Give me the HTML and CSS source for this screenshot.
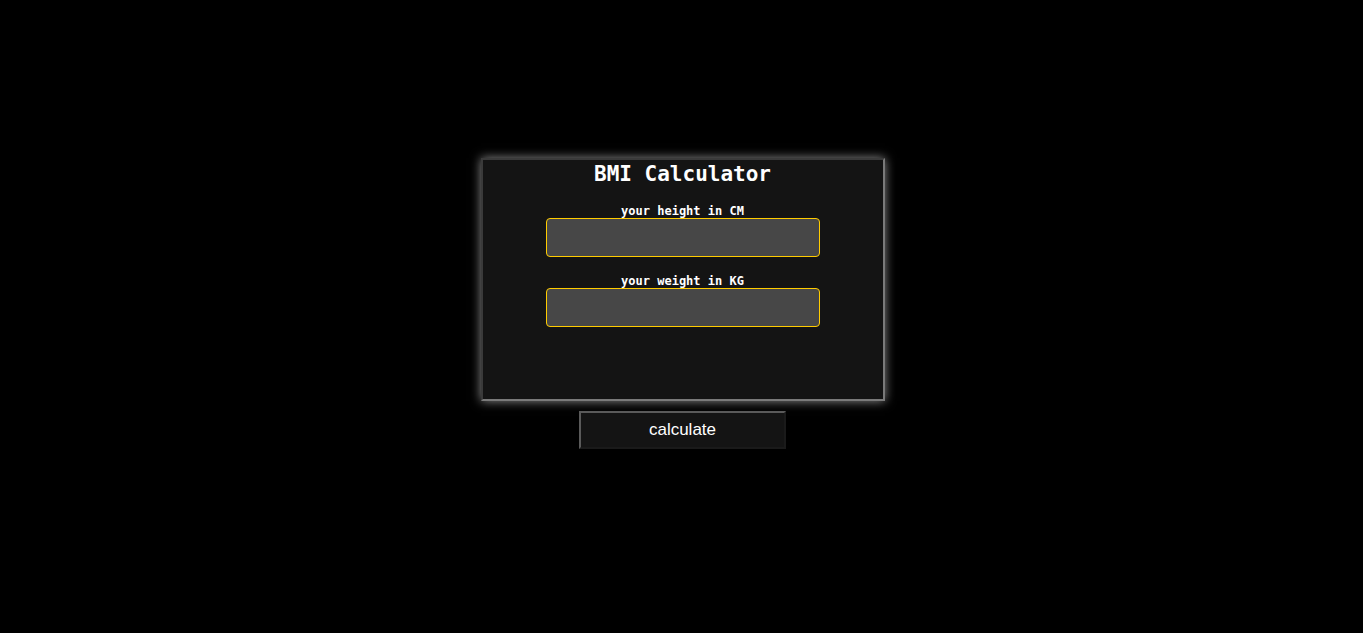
FILE: index.html
```html
<!DOCTYPE html>
<html>
<head>
<meta charset="utf-8">
<link rel="stylesheet" href="styles.css">
</head>
<body>
<main class="page">
  <section class="card">
    <h1 class="title">BMI Calculator</h1>
    <div class="field">
      <label class="label" for="h">your height in CM</label>
      <input class="input" id="h" type="text">
    </div>
    <div class="field">
      <label class="label" for="w">your weight in KG</label>
      <input class="input" id="w" type="text">
    </div>
  </section>
  <button class="btn">calculate</button>
</main>
</body>
</html>
```
FILE: styles.css
```css
html, body {
  margin: 0;
  padding: 0;
  background: #000;
}
.page {
  min-height: 100vh;
  box-sizing: border-box;
  display: flex;
  flex-direction: column;
  align-items: center;
  padding-top: 158px;
  padding-left: 2px;
}
.card {
  width: 404px;
  height: 243px;
  box-sizing: border-box;
  background: #141414;
  border: 2px solid;
  border-color: #3a3a3a #7a7a7a #7a7a7a #3a3a3a;
  box-shadow: 0 0 10px rgba(255,255,255,0.55);
  display: flex;
  flex-direction: column;
  align-items: center;
}
.title {
  margin: 0;
  padding-top: 1px;
  font-family: "DejaVu Sans Mono", "Liberation Mono", monospace;
  font-size: 21px;
  line-height: 26px;
  font-weight: bold;
  color: #fff;
}
.field {
  display: flex;
  flex-direction: column;
  align-items: center;
  margin-top: 17px;
}
.label {
  font-family: "DejaVu Sans Mono", "Liberation Mono", monospace;
  font-size: 12px;
  line-height: 14px;
  font-weight: bold;
  color: #fff;
}
.input {
  width: 274px;
  height: 39px;
  box-sizing: border-box;
  margin: 0;
  background: #474747;
  border: 1px solid #ffcc00;
  border-radius: 4px;
  outline: none;
  color: #fff;
}
.btn {
  margin-top: 10px;
  width: 207px;
  height: 38px;
  box-sizing: border-box;
  background: #141414;
  border: 2px solid;
  border-color: #5a5a5a #1a1a1a #1a1a1a #5a5a5a;
  color: #fff;
  font-family: "Liberation Sans", Arial, sans-serif;
  font-size: 17px;
  padding: 0;
}
```
